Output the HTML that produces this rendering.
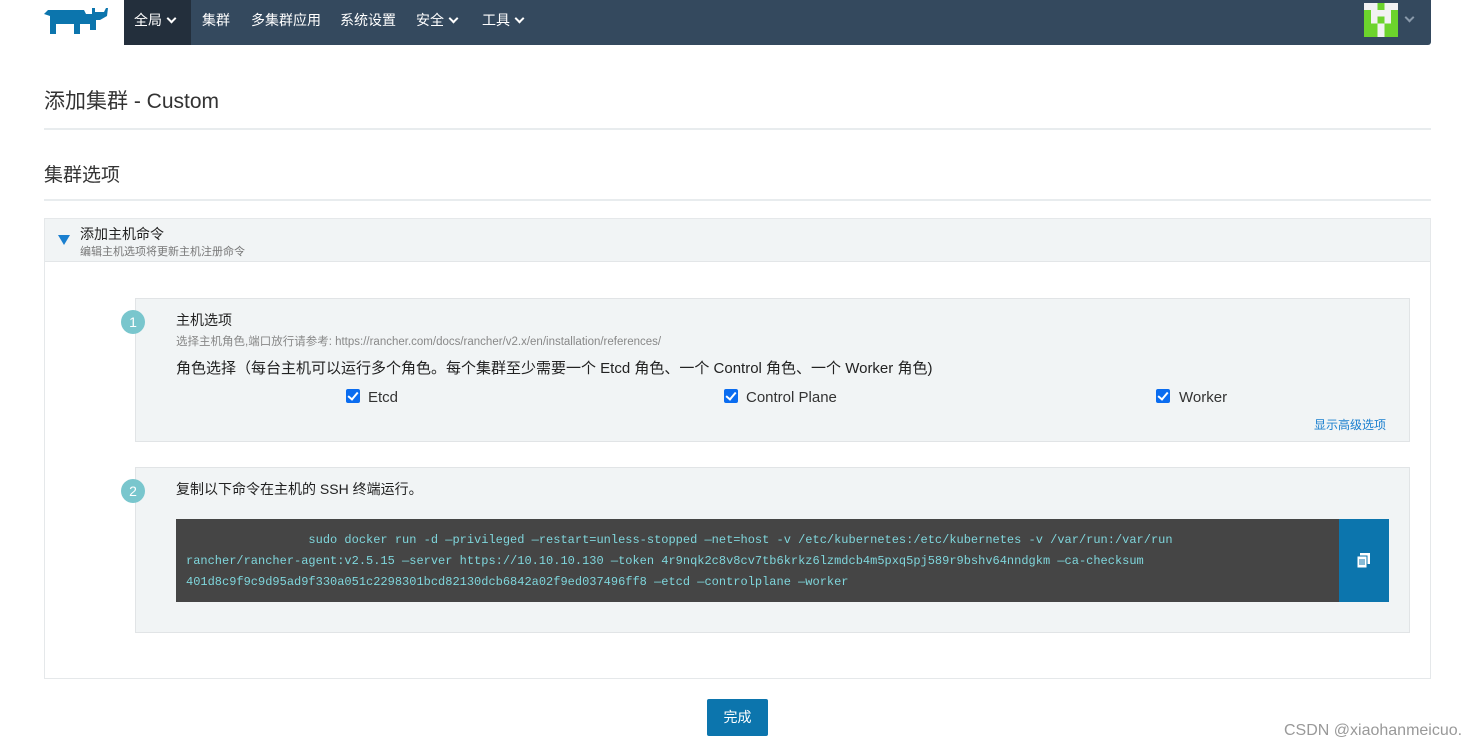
<!DOCTYPE html>
<html><head><meta charset="utf-8"><style>
*{box-sizing:border-box;margin:0;padding:0}
body{width:1481px;height:750px;background:#fff;font-family:"Liberation Sans","Noto Sans CJK SC",sans-serif;color:#333;position:relative;overflow:hidden}
.abs{position:absolute}
.nav{position:absolute;left:124px;top:0;width:1307px;height:45px;background:#34495e;border-radius:0 0 3px 3px}
.chev{display:inline-block;width:7px;height:7px;border-right:2px solid #fff;border-bottom:2px solid #fff;transform:rotate(45deg);margin-left:6px;position:relative;top:-3px}
.hr{position:absolute;left:44px;width:1387px;height:2px;background:#e8ecee}
.circle{position:absolute;width:24px;height:24px;border-radius:50%;background:#79c6cd;color:#fff;font-size:14px;text-align:center;line-height:24px}
.cb{position:absolute;width:14px;height:14px;background:#0a6cf0;border-radius:2px}
.cb:after{content:"";position:absolute;left:4px;top:1px;width:4px;height:8px;border-right:2px solid #fff;border-bottom:2px solid #fff;transform:rotate(40deg)}
.lbl{position:absolute;font-size:15px;color:#333}
.code{position:absolute;left:176px;top:519px;width:1163px;height:83px;background:#454545;color:#7fd6dc;font-family:"Liberation Mono",monospace;font-size:12px;line-height:21px;padding:11px 0 0 10px;white-space:pre}
</style></head><body>
<svg class="abs" style="left:44px;top:6px" width="68" height="30" viewBox="0 0 68 30"><path d="M0 8 L4 4 L40 4 L42 8 L48 8 L48 2 L51 2 L51 6 L60 6 L62 2 L64 2 L63 10 L56 14 L52 14 L52 24 L46 24 L46 18 L36 18 L36 28 L30 28 L30 18 L12 18 L12 28 L6 28 L6 10 Z" fill="#0c75ad"/></svg>
<div class="abs" style="left:124px;top:0;width:67px;height:45px;background:#232f3c"></div>
<div class="nav" style="left:191px;width:1240px;border-radius:0 0 3px 0"></div>
<div class="abs" style="left:124px;top:0;width:1307px;height:45px">
<span style="position:absolute;left:10px;top:10px;color:#fff;font-size:14px">全局<i class="chev"></i></span>
<span style="position:absolute;left:78px;top:10px;color:#fff;font-size:14px">集群</span>
<span style="position:absolute;left:127px;top:10px;color:#fff;font-size:14px">多集群应用</span>
<span style="position:absolute;left:216px;top:10px;color:#fff;font-size:14px">系统设置</span>
<span style="position:absolute;left:292px;top:10px;color:#fff;font-size:14px">安全<i class="chev"></i></span>
<span style="position:absolute;left:358px;top:10px;color:#fff;font-size:14px">工具<i class="chev"></i></span>
</div>
<svg class="abs" style="left:1364px;top:3px" width="34" height="34" viewBox="0 0 5 5" shape-rendering="crispEdges"><rect width="5" height="5" fill="#f2f2f2"/><path d="M2 0h1v1h-1zM0 1h2v4h-2zM3 1h2v4h-2zM2 2h1v1h-1z" fill="#6cd42c"/><path d="M1 1h1v2h-1zM3 1h1v2h-1z" fill="#f2f2f2"/></svg>
<div class="abs" style="left:1406px;top:14px;width:7px;height:7px;border-right:2px solid #8a9aab;border-bottom:2px solid #8a9aab;transform:rotate(45deg)"></div>

<div class="abs" style="left:44px;top:85px;font-size:21px;color:#333">添加集群 - Custom</div>
<div class="hr" style="top:128px"></div>
<div class="abs" style="left:44px;top:160px;font-size:19px;color:#333">集群选项</div>
<div class="hr" style="top:199px"></div>

<div class="abs" style="left:44px;top:218px;width:1387px;height:461px;border:1px solid #e5e8ea"></div>
<div class="abs" style="left:45px;top:219px;width:1385px;height:43px;background:#f1f4f5;border-bottom:1px solid #e3e6e8"></div>
<div class="abs" style="left:58px;top:235px;width:0;height:0;border-left:6px solid transparent;border-right:6px solid transparent;border-top:10px solid #1a7fcf"></div>
<div class="abs" style="left:80px;top:224px;font-size:14px;color:#222">添加主机命令</div>
<div class="abs" style="left:80px;top:243px;font-size:11px;color:#777">编辑主机选项将更新主机注册命令</div>

<div class="abs" style="left:135px;top:298px;width:1275px;height:144px;background:#f1f4f5;border:1px solid #e1e4e6"></div>
<div class="circle" style="left:121px;top:310px">1</div>
<div class="abs" style="left:176px;top:310px;font-size:14px;color:#222">主机选项</div>
<div class="abs" style="left:176px;top:333px;font-size:11.5px;color:#888">选择主机角色,端口放行请参考: https://rancher.com/docs/rancher/v2.x/en/installation/references/</div>
<div class="abs" style="left:176px;top:357px;font-size:15px;color:#222">角色选择（每台主机可以运行多个角色。每个集群至少需要一个 Etcd 角色、一个 Control 角色、一个 Worker 角色)</div>
<div class="cb" style="left:346px;top:389px"></div><div class="lbl" style="left:368px;top:389px">Etcd</div>
<div class="cb" style="left:724px;top:389px"></div><div class="lbl" style="left:746px;top:389px">Control Plane</div>
<div class="cb" style="left:1156px;top:389px"></div><div class="lbl" style="left:1179px;top:389px">Worker</div>
<div class="abs" style="left:1314px;top:416px;font-size:12px;color:#1a7fcf">显示高级选项</div>

<div class="abs" style="left:135px;top:467px;width:1275px;height:166px;background:#f1f4f5;border:1px solid #e1e4e6"></div>
<div class="circle" style="left:121px;top:479px">2</div>
<div class="abs" style="left:176px;top:479px;font-size:14px;color:#222">复制以下命令在主机的 SSH 终端运行。</div>
<div class="code">                 sudo docker run -d —privileged —restart=unless-stopped —net=host -v /etc/kubernetes:/etc/kubernetes -v /var/run:/var/run
rancher/rancher-agent:v2.5.15 —server https://10.10.10.130 —token 4r9nqk2c8v8cv7tb6krkz6lzmdcb4m5pxq5pj589r9bshv64nndgkm —ca-checksum
401d8c9f9c9d95ad9f330a051c2298301bcd82130dcb6842a02f9ed037496ff8 —etcd —controlplane —worker</div>
<div class="abs" style="left:1339px;top:519px;width:50px;height:83px;background:#0c75ad"></div>
<svg class="abs" style="left:1357px;top:553px" width="14" height="15" viewBox="0 0 14 15"><rect x="3" y="0" width="10" height="11" fill="#fff"/><rect x="0" y="3" width="10" height="12" fill="#fff" stroke="#0c75ad"/><path d="M2 7h6M2 9h6M2 11h6" stroke="#0c75ad"/></svg>

<div class="abs" style="left:707px;top:699px;width:61px;height:37px;background:#0c75ad;border-radius:2px;color:#fff;font-size:14px;text-align:center;line-height:37px">完成</div>
<div class="abs" style="left:1284px;top:722px;font-size:16px;color:#999">CSDN @xiaohanmeicuo.</div>
</body></html>
